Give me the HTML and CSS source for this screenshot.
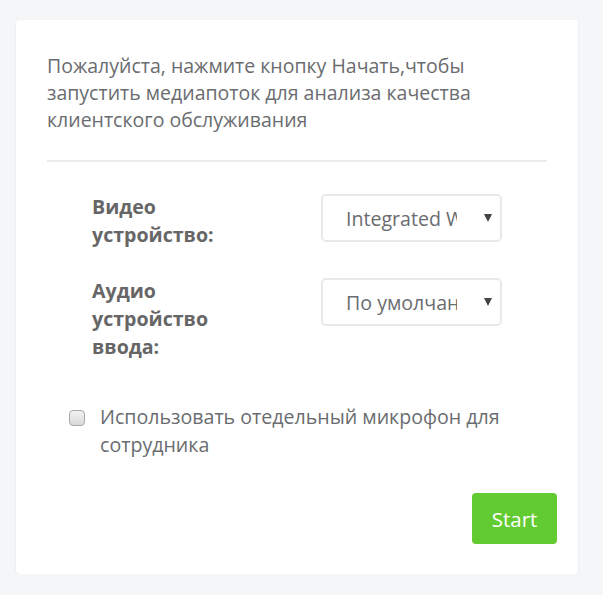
FILE: index.html
```html
<!DOCTYPE html>
<html lang="ru">
<head>
<meta charset="utf-8">
<link rel="stylesheet" href="styles.css">
</head>
<body>
<div class="card">
  <p class="intro">Пожалуйста, нажмите кнопку Начать,чтобы запустить медиапоток для анализа качества клиентского обслуживания</p>
  <hr class="divider">
  <div class="form">
    <div class="row">
      <label class="label">Видео устройство:</label>
      <div class="select-wrap">
        <select class="select"><option>Integrated Webcam</option></select>
      </div>
    </div>
    <div class="row">
      <label class="label">Аудио устройство ввода:</label>
      <div class="select-wrap">
        <select class="select"><option>По умолчанию</option></select>
      </div>
    </div>
  </div>
  <label class="check">
    <input type="checkbox" class="checkbox">
    <span class="check-text">Использовать отедельный микрофон для сотрудника</span>
  </label>
  <div class="actions">
    <button class="btn">Start</button>
  </div>
</div>
</body>
</html>
```

FILE: styles.css
```css
* { box-sizing: border-box; }
html, body { margin: 0; padding: 0; }
body {
  background: #f5f6f8;
  font-family: "Open Sans", "Liberation Sans", sans-serif;
  color: #6a6c6f;
  padding: 20px 25px 0 16px;
}
.card {
  width: 562px;
  height: 554px;
  background: #fff;
  border-radius: 4px;
  box-shadow: 0 1px 3px rgba(0,0,0,0.08);
  padding: 32px 31px 0 31px;
}
.intro {
  margin: 0;
  font-size: 19.5px;
  line-height: 27px;
  max-width: 440px;
}
.divider {
  border: 0;
  border-top: 2px solid #ebecee;
  margin: 27px 0 31px;
}
.form { padding-left: 45px; }
.row {
  display: grid;
  grid-template-columns: 229px 181px;
  align-items: start;
  margin-bottom: 28px;
}
.label {
  font-weight: 700;
  font-size: 19.6px;
  line-height: 28px;
  color: #666;
  max-width: 150px;
}
.select-wrap {
  position: relative;
  margin-top: 1px;
}
.select-wrap::after {
  content: "";
  position: absolute;
  right: 10px;
  top: 20px;
  border-left: 4px solid transparent;
  border-right: 4px solid transparent;
  border-top: 8px solid #444;
  pointer-events: none;
}
.select {
  appearance: none;
  -webkit-appearance: none;
  width: 181px;
  height: 48px;
  border: 2px solid #e8e9eb;
  border-radius: 5px;
  background: #fff;
  padding: 0 43px 0 23px;
  font-family: "Open Sans", "Liberation Sans", sans-serif;
  font-size: 19.6px;
  color: #6a6c6f;
}
.check {
  display: flex;
  align-items: flex-start;
  margin: 42px 0 0 22px;
  font-size: 19.6px;
  line-height: 28px;
}
.checkbox {
  appearance: none;
  -webkit-appearance: none;
  width: 16px;
  height: 16px;
  margin: 7px 15px 0 0;
  flex: none;
  border: 1px solid #a9a9a9;
  border-radius: 4px;
  background: linear-gradient(#f2f2f2, #d9d9d9);
}
.actions {
  display: flex;
  justify-content: flex-end;
  margin: 34px -10px 0 0;
}
.btn {
  width: 85px;
  height: 51px;
  background: #62cb31;
  border: 0;
  border-radius: 4px;
  color: #fff;
  font-family: "Open Sans", "Liberation Sans", sans-serif;
  font-size: 20.5px;
}
```
